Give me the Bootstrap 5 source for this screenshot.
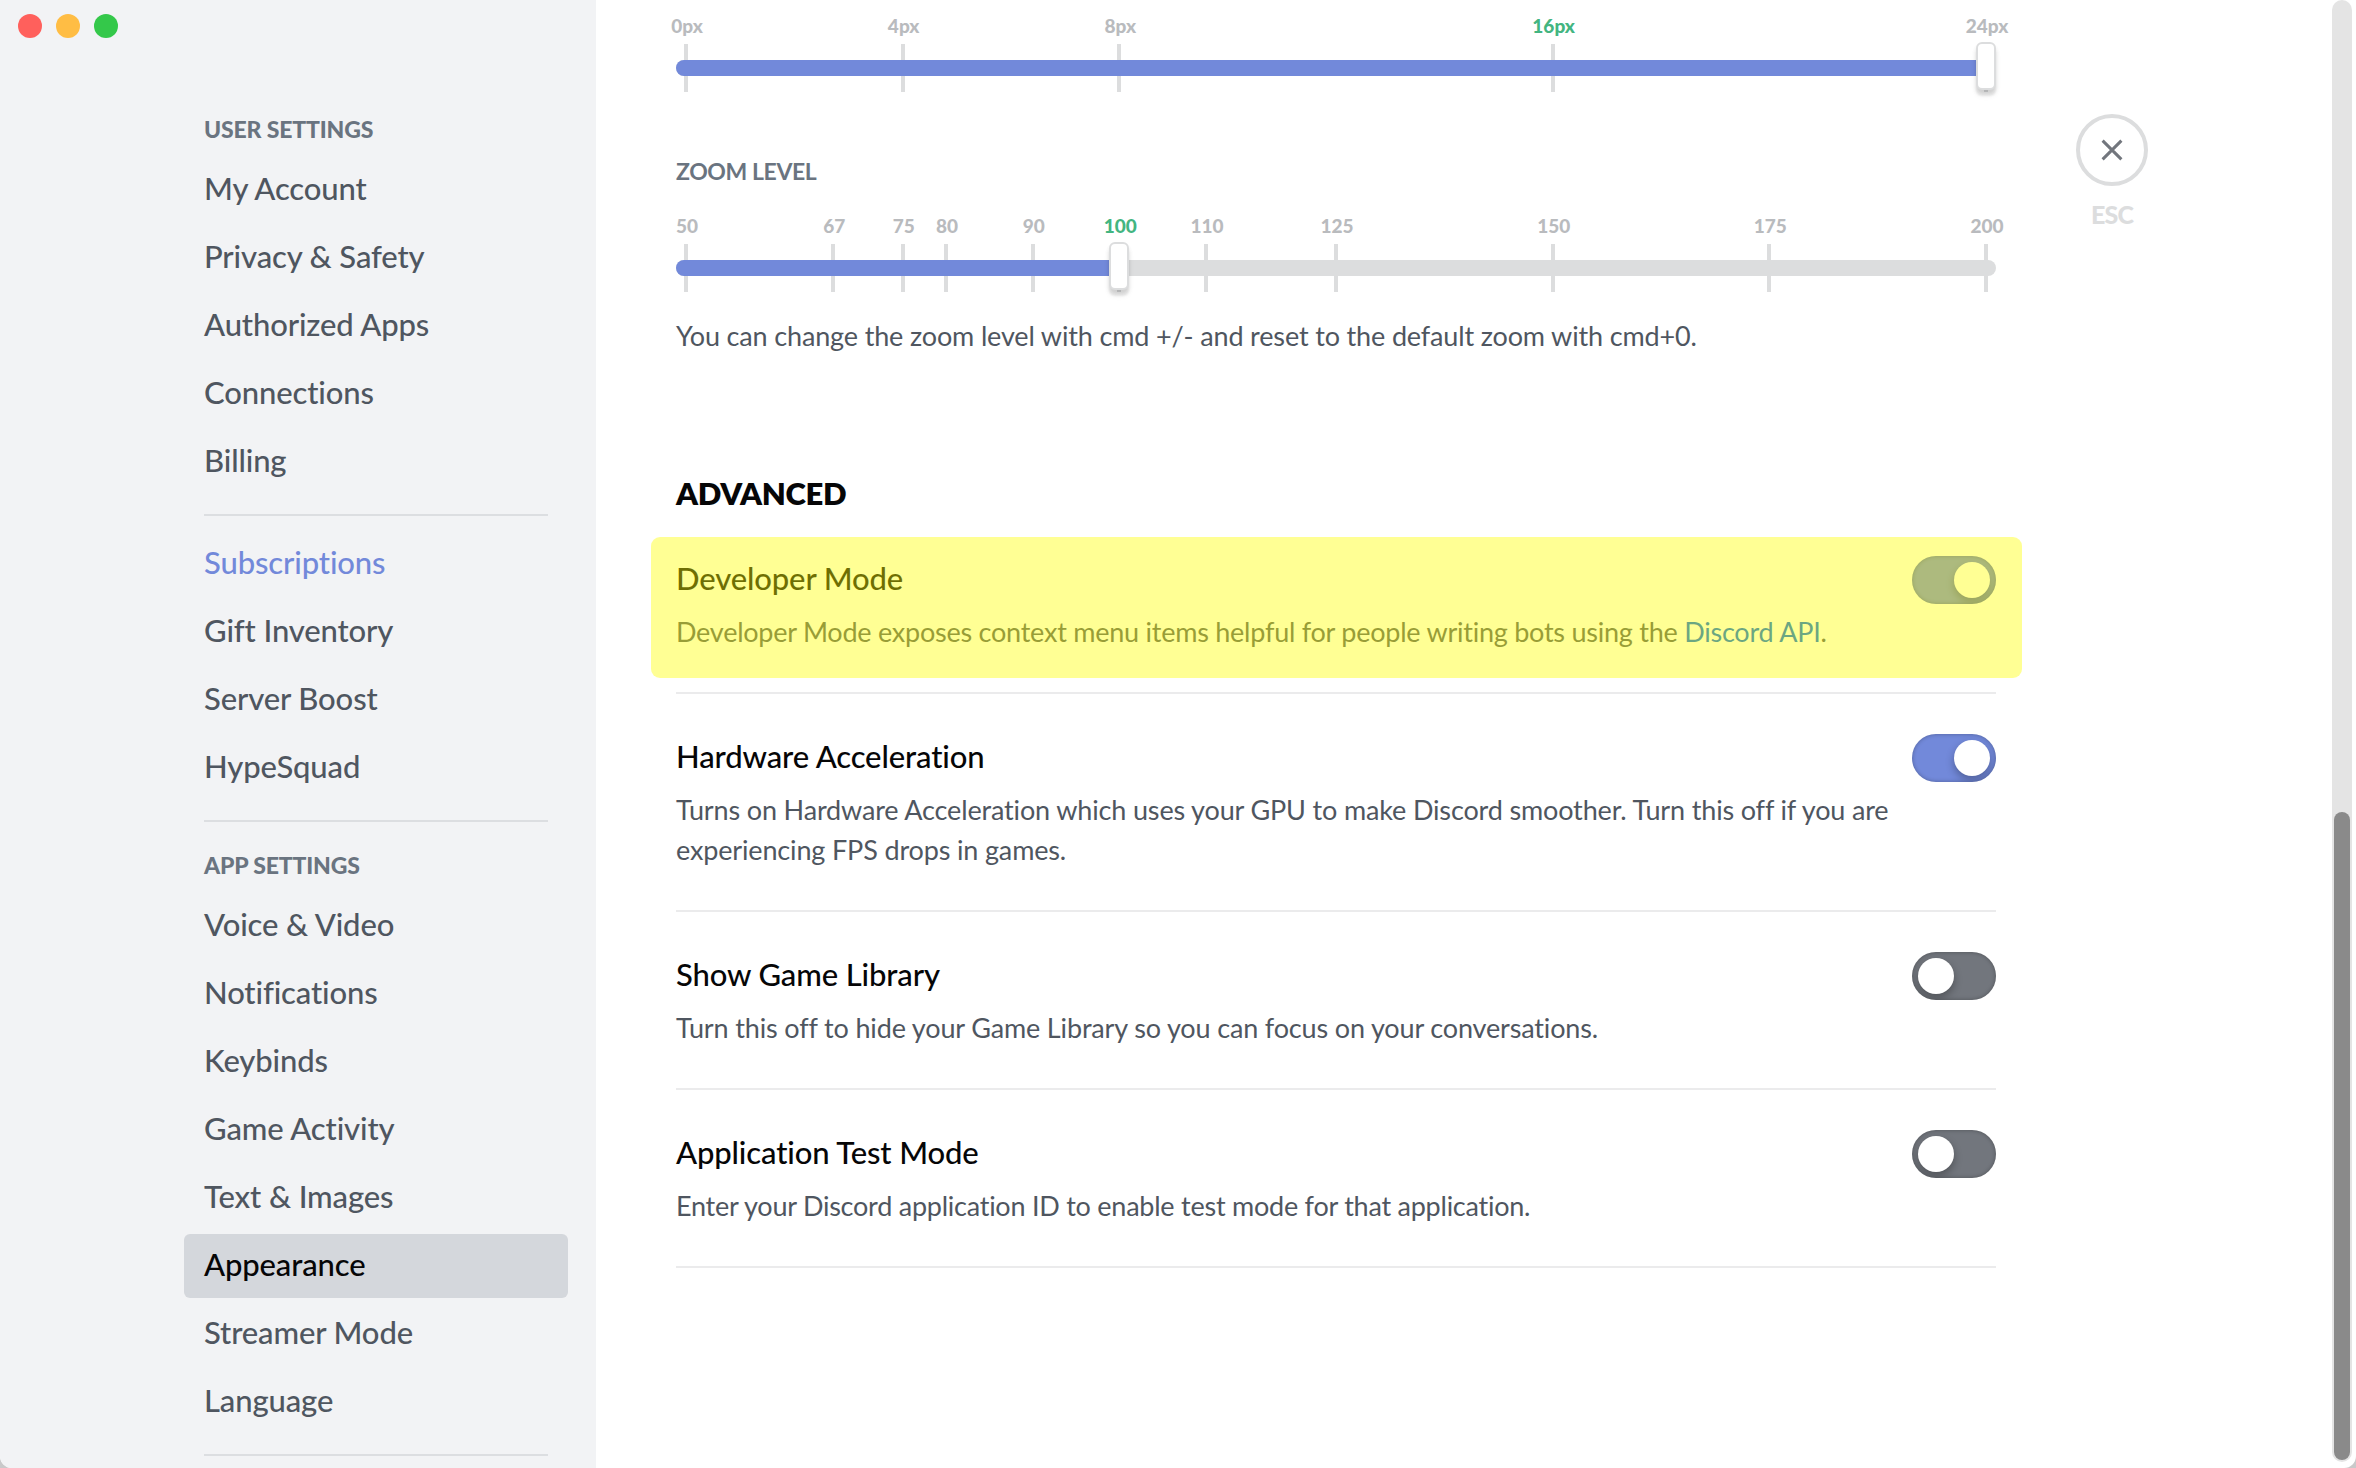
<!DOCTYPE html>
<html lang="en">
<head>
<meta charset="utf-8">
<meta name="viewport" content="width=device-width, initial-scale=1">
<title>Appearance</title>
<link rel="stylesheet" href="https://cdn.jsdelivr.net/npm/bootstrap@5.3.0/dist/css/bootstrap.min.css">
<style>
  body { background: #c9c9ca; font-family: Lato, "Open Sans", sans-serif; font-variant-ligatures: none; color: #4f5660; }
  .app-window { width: 2356px; height: 1468px; background: #fff; border-radius: 0 0 12px 12px; }

  /* Sidebar */
  .side { width: 596px; background: #f2f3f5; }
  .traffic { gap: 14px; padding: 14px 0 0 18px; height: 102px; }
  .light-dot { width: 24px; height: 24px; border-radius: 50%; }
  .side-list { width: 384px; margin-left: 184px; }
  .side-head { height: 56px; line-height: 54px; padding: 0 20px; font-size: 23px; font-weight: 900; letter-spacing: -.15px; color: #6a7480; }
  .side-list .nav-link { height: 64px; margin-bottom: 4px; padding: 0 20px; line-height: 60px; font-size: 31px; font-weight: 500; letter-spacing: -.12px; color: #4f5660; border-radius: 6px; }
  .side-list .nav-link.active { background: #d4d7dc; color: #060607; }
  .side-list .nav-link.accent { color: #7289da; }
  .side-rule { height: 2px; margin: 16px 20px 16px; background: #dcdee1; }

  /* Sliders */
  .content-col { width: 1320px; margin-left: 80px; }
  .slider { height: 76px; padding: 0 10px; }
  .slider-scale { height: 76px; }
  .stop { top: 0; width: 80px; margin-left: -39px; text-align: center; font-size: 19px; line-height: 19px; font-weight: 900; color: #b9bbbe; }
  .stop.default { color: #43b581; }
  .stop::after { content: ""; display: block; width: 4px; height: 48px; margin: 9px auto 0 37px; background: #dcddde; }
  .rail { top: 44px; left: -10px; right: -10px; height: 16px; border-radius: 8px; background: #dcddde; }
  .rail-fill { height: 16px; background: #7289da; border-radius: 8px 0 0 8px; }
  .grip { top: 26px; width: 20px; height: 48px; margin-left: -10px; border: 2px solid #dcddde; border-radius: 6px; background: #fff; box-shadow: 0 6px 2px rgba(0,0,0,.05), 0 4px 4px rgba(0,0,0,.1), 0 6px 6px rgba(0,0,0,.05); }
  .field-head { margin: 64px 0 0; height: 60px; line-height: 30px; font-size: 23px; font-weight: 700; letter-spacing: -.4px; color: #6a7480; }
  .note { font-size: 27px; line-height: 40px; letter-spacing: -.24px; color: #4f5660; }
  .note.loose { letter-spacing: -.15px; }
  .zoom-note { margin: 24px 0 0; }
  .section-head { margin: 114px 0 0; height: 86px; line-height: 47px; font-size: 31px; font-weight: 800; letter-spacing: -.3px; color: #060607; }

  /* Settings rows */
  .setting { padding-bottom: 40px; margin-bottom: 40px; border-bottom: 2px solid #ebebec; }
  .setting-title { height: 48px; line-height: 45px; font-size: 31px; font-weight: 500; letter-spacing: -.12px; color: #060607; }
  .setting .note { margin: 8px 0 0; }
  .note a { color: #0067e0; text-decoration: none; }
  .toggle { width: 84px; height: 48px; padding: 6px; border-radius: 24px; background: #72767d; box-shadow: inset 0 0 4px rgba(0,0,0,.3); overflow: hidden; }
  .toggle.on { background: #7289da; justify-content: flex-end; }
  .knob { width: 36px; height: 36px; border-radius: 50%; background: #fff; box-shadow: 0 4px 8px rgba(0,0,0,.3); }
  .highlight { top: -19px; left: -25px; right: -26px; height: 141px; border-radius: 9px; background: rgba(255,255,0,.42); }

  /* Close button and scrollbar */
  .close-col { width: 72px; margin-left: 80px; padding-top: 114px; }
  .close-ring { width: 72px; height: 72px; border: 4px solid #dcddde; border-radius: 50%; background: none; padding: 0; }
  .close-key { height: 58px; line-height: 56px; font-size: 25px; font-weight: 900; letter-spacing: -.8px; color: #dcddde; }
  .scroll-track { width: 20px; height: 1462px; margin-right: 4px; padding: 0 2px 2px; border-radius: 10px; background: #e4e4e4; }
  .scroll-thumb { height: 648px; border-radius: 8px; background: #8a8a8a; }
</style>
</head>
<body class="overflow-hidden">
<div class="app-window d-flex overflow-hidden">

  <aside class="side flex-shrink-0">
    <div class="traffic d-flex">
      <span class="light-dot" style="background:#ff605c"></span>
      <span class="light-dot" style="background:#ffbd44"></span>
      <span class="light-dot" style="background:#34c84a"></span>
    </div>
    <nav class="side-list nav flex-column">
      <div class="side-head">USER SETTINGS</div>
      <a class="nav-link">My Account</a>
      <a class="nav-link">Privacy &amp; Safety</a>
      <a class="nav-link">Authorized Apps</a>
      <a class="nav-link">Connections</a>
      <a class="nav-link">Billing</a>
      <div class="side-rule"></div>
      <a class="nav-link accent">Subscriptions</a>
      <a class="nav-link">Gift Inventory</a>
      <a class="nav-link">Server Boost</a>
      <a class="nav-link">HypeSquad</a>
      <div class="side-rule"></div>
      <div class="side-head">APP SETTINGS</div>
      <a class="nav-link">Voice &amp; Video</a>
      <a class="nav-link">Notifications</a>
      <a class="nav-link">Keybinds</a>
      <a class="nav-link">Game Activity</a>
      <a class="nav-link">Text &amp; Images</a>
      <a class="nav-link active">Appearance</a>
      <a class="nav-link">Streamer Mode</a>
      <a class="nav-link">Language</a>
      <div class="side-rule mb-0"></div>
    </nav>
  </aside>

  <main class="content-col flex-shrink-0 pt-3">
    <div class="slider">
      <div class="slider-scale position-relative">
        <div class="stop position-absolute" style="left:0%">0px</div>
        <div class="stop position-absolute" style="left:16.667%">4px</div>
        <div class="stop position-absolute" style="left:33.333%">8px</div>
        <div class="stop position-absolute default" style="left:66.667%">16px</div>
        <div class="stop position-absolute" style="left:100%">24px</div>
        <div class="rail position-absolute"><div class="rail-fill" style="width:99%"></div></div>
        <div class="grip position-absolute" style="left:100%"></div>
      </div>
    </div>

    <h5 class="field-head">ZOOM LEVEL</h5>
    <div class="slider">
      <div class="slider-scale position-relative">
        <div class="stop position-absolute" style="left:0%">50</div>
        <div class="stop position-absolute" style="left:11.333%">67</div>
        <div class="stop position-absolute" style="left:16.667%">75</div>
        <div class="stop position-absolute" style="left:20%">80</div>
        <div class="stop position-absolute" style="left:26.667%">90</div>
        <div class="stop position-absolute default" style="left:33.333%">100</div>
        <div class="stop position-absolute" style="left:40%">110</div>
        <div class="stop position-absolute" style="left:50%">125</div>
        <div class="stop position-absolute" style="left:66.667%">150</div>
        <div class="stop position-absolute" style="left:83.333%">175</div>
        <div class="stop position-absolute" style="left:100%">200</div>
        <div class="rail position-absolute"><div class="rail-fill" style="width:33.6%"></div></div>
        <div class="grip position-absolute" style="left:33.333%"></div>
      </div>
    </div>
    <p class="note loose zoom-note">You can change the zoom level with cmd +/- and reset to the default zoom with cmd+0.</p>

    <h2 class="section-head">ADVANCED</h2>

    <section class="setting position-relative">
      <div class="d-flex justify-content-between">
        <div class="setting-title">Developer Mode</div>
        <div class="toggle on d-flex"><span class="knob"></span></div>
      </div>
      <p class="note">Developer Mode exposes context menu items helpful for people writing bots using the <a href="#">Discord API</a>.</p>
      <div class="highlight position-absolute"></div>
    </section>

    <section class="setting">
      <div class="d-flex justify-content-between">
        <div class="setting-title">Hardware Acceleration</div>
        <div class="toggle on d-flex"><span class="knob"></span></div>
      </div>
      <p class="note loose">Turns on Hardware Acceleration which uses your GPU to make Discord smoother. Turn this off if you are<br>experiencing FPS drops in games.</p>
    </section>

    <section class="setting">
      <div class="d-flex justify-content-between">
        <div class="setting-title">Show Game Library</div>
        <div class="toggle d-flex"><span class="knob"></span></div>
      </div>
      <p class="note loose">Turn this off to hide your Game Library so you can focus on your conversations.</p>
    </section>

    <section class="setting">
      <div class="d-flex justify-content-between">
        <div class="setting-title">Application Test Mode</div>
        <div class="toggle d-flex"><span class="knob"></span></div>
      </div>
      <p class="note">Enter your Discord application ID to enable test mode for that application.</p>
    </section>
  </main>

  <div class="close-col flex-shrink-0 text-center">
    <button class="close-ring d-flex align-items-center justify-content-center" type="button" aria-label="Close">
      <svg width="24" height="24" viewBox="0 0 24 24" fill="none" stroke="#72767d" stroke-width="3"><path d="M2.6 2.6 21.4 21.4M21.4 2.6 2.6 21.4"/></svg>
    </button>
    <div class="close-key">ESC</div>
  </div>

  <div class="scroll-track d-flex flex-column justify-content-end ms-auto">
    <div class="scroll-thumb"></div>
  </div>
</div>
<script src="https://cdn.jsdelivr.net/npm/bootstrap@5.3.0/dist/js/bootstrap.bundle.min.js"></script>
</body>
</html>
